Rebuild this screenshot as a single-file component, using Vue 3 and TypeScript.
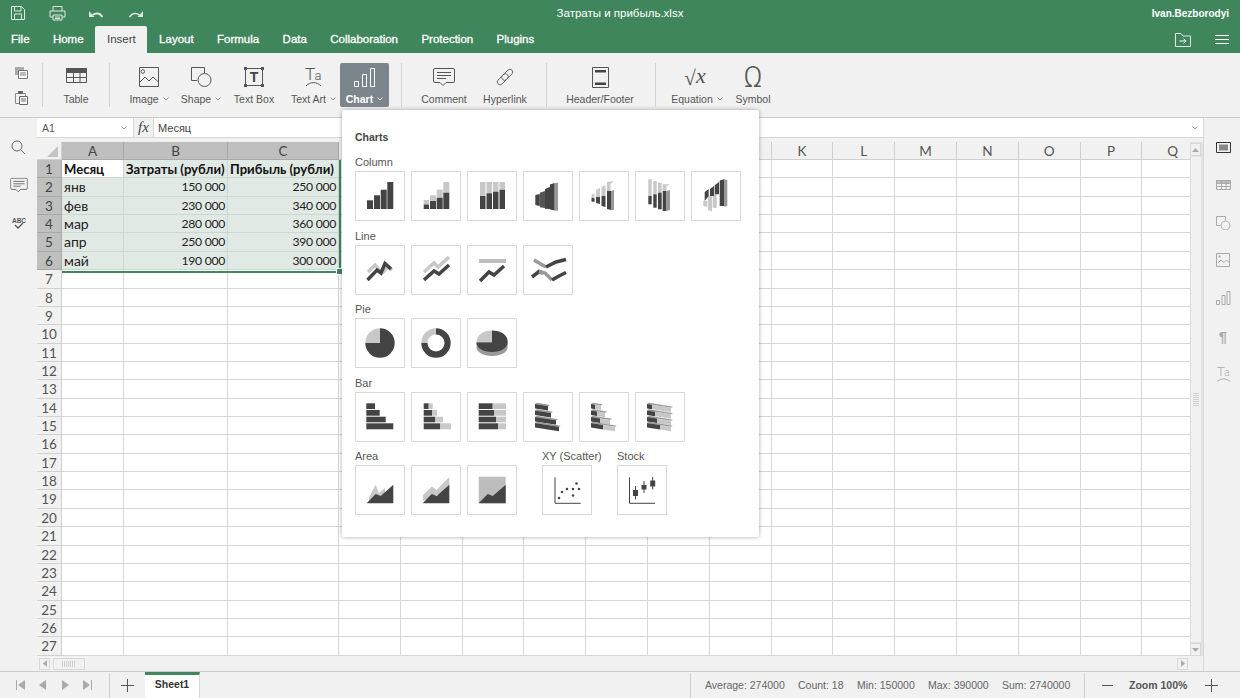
<script setup lang="ts">
import { h, type FunctionalComponent } from 'vue'

type Shape = { d?: string; f?: string; s?: string; w?: number; t?: string; x?: number; y?: number; size?: number; font?: string; weight?: number; italic?: boolean }

// all the small pictures are lists of shapes, drawn by this one component
const Ico: FunctionalComponent<{ shapes: Shape[]; w?: number; h?: number }> = (props) =>
  h(
    'svg',
    { width: props.w ?? 50, height: props.h ?? 50, viewBox: `0 0 ${props.w ?? 50} ${props.h ?? 50}`, style: 'display:block' },
    props.shapes.map((p) =>
      p.t
        ? h('text', { x: p.x, y: p.y, fill: p.f ?? '#444', 'font-size': p.size, 'font-family': p.font ?? 'Liberation Sans, sans-serif', 'font-weight': p.weight ?? 400, 'font-style': p.italic ? 'italic' : 'normal', 'text-anchor': 'middle' }, p.t)
        : h('path', { d: p.d, fill: p.f ?? 'none', stroke: p.s ?? 'none', 'stroke-width': p.w ?? 1 })
    )
  )

const D = '#444'
const L = '#c8c8c8'
const M = '#999'
const r = (x0: number, y0: number, x1: number, y1: number, f = D): Shape => ({ d: `M${x0} ${y0}H${x1}V${y1}H${x0}Z`, f })
const pg = (f: string, ...pts: number[]): Shape => {
  let d = ''
  for (let i = 0; i < pts.length; i += 2) d += `${i ? 'L' : 'M'}${pts[i]} ${pts[i + 1]}`
  return { d: d + 'Z', f }
}
const ln = (s: string, w: number, ...pts: number[]): Shape => {
  let d = ''
  for (let i = 0; i < pts.length; i += 2) d += `${i ? 'L' : 'M'}${pts[i]} ${pts[i + 1]}`
  return { d, s, w }
}

// one sloped bar of the 3d bar charts
const bar3d = (y: number, x1: number, split?: number): Shape[] => {
  const sl = (x1 - 12) * 0.16
  const out: Shape[] = [pg(M, 12, y, x1, y + sl, x1 + 2, y + sl - 1.2, 14, y - 1.2)]
  if (split === undefined) {
    out.push(pg(D, 12, y, x1, y + sl, x1, y + sl + 4.5, 12, y + 4.5))
  } else {
    const s2 = (split - 12) * 0.16
    out.push(pg(D, 12, y, split, y + s2, split, y + s2 + 4.5, 12, y + 4.5))
    out.push(pg(L, split, y + s2, x1, y + sl, x1, y + sl + 4.5, split, y + s2 + 4.5))
  }
  return out
}

const sections: { label: string; icons: Shape[][] }[] = [
  {
    label: 'Column',
    icons: [
      [r(12, 29.3, 18, 38), r(19, 24.3, 25, 38), r(25.7, 18.7, 31.7, 38), r(32.3, 11, 38.3, 38)],
      [r(12.7, 29, 18, 33.5, L), r(12.7, 33.5, 18, 38), r(19, 24.3, 25, 30, L), r(19, 30, 25, 38), r(25.7, 18.7, 31.7, 26.7, L), r(25.7, 26.7, 31.7, 38), r(32.3, 11, 38.3, 21.7, L), r(32.3, 21.7, 38.3, 38)],
      [r(13, 11, 18.5, 25, L), r(13, 25, 18.5, 38), r(19.5, 11, 25, 22.3, L), r(19.5, 22.3, 25, 38), r(26, 11, 31.5, 20.7, L), r(26, 20.7, 31.5, 38), r(32.5, 11, 38, 18.7, L), r(32.5, 18.7, 38, 38)],
      [pg(D, 12.3, 24, 16.8, 23, 16.8, 35, 12.3, 34), pg('#555', 16.8, 21.7, 22, 20, 22, 37, 16.8, 36.3), pg(D, 22, 18, 27, 16, 27, 38, 22, 37.7), pg(D, 27, 13.5, 31.7, 12, 31.7, 39.5, 27, 38.5), pg(M, 31.7, 12, 35, 11.7, 35, 39.7, 31.7, 39.5)],
      [pg(L, 12.5, 24, 15.5, 22, 15.5, 27, 12.5, 27), pg(D, 12.5, 27, 15.5, 27, 15.5, 31, 12.5, 30.5), pg(L, 17, 19, 21, 17, 21, 26, 17, 26), pg(D, 17, 26, 21, 26, 21, 33, 17, 32), pg(L, 22.5, 16, 26.5, 14, 26.5, 25, 22.5, 25), pg(D, 22.5, 25, 26.5, 25, 26.5, 36, 22.5, 35), pg(L, 28, 11, 35, 10, 31.5, 13, 31.5, 20, 28, 20), pg(D, 28, 20, 32, 20, 32, 39, 28, 38), pg(M, 32, 20, 35, 19, 35, 39, 32, 39)],
      [pg(L, 13.3, 8.3, 16.7, 8.3, 16.7, 25, 13.3, 25), r(13.3, 25, 16.7, 33.3), pg(L, 18.3, 10, 21.7, 10, 21.7, 23.3, 18.3, 23.3), r(18.3, 23.3, 21.7, 36.7), pg(L, 23, 11.7, 26.7, 11.7, 26.7, 21.7, 23, 21.7), r(23, 21.7, 26.7, 38.3), pg(L, 27.7, 13.3, 35, 13.3, 31.5, 15, 31.5, 20, 27.7, 20), r(27.7, 20, 31.5, 40), pg(M, 31.5, 20, 35, 19, 35, 39, 31.5, 40)],
      [pg(L, 12.3, 30, 16.3, 30, 16.3, 36, 12.3, 35), pg(L, 17, 25, 21, 25, 21, 40.5, 17, 39), pg(L, 21.7, 23.3, 25.7, 23.3, 25.7, 37, 21.7, 36.7), pg(D, 13.7, 21, 17.7, 18, 17.7, 25, 13.7, 30), pg(D, 19, 18, 23, 15, 23, 25, 19, 25), pg(D, 23.7, 14.3, 28, 11, 28, 23.3, 23.7, 23.3), pg(D, 28.7, 9.5, 33, 8.3, 33, 35, 28.7, 35), pg(M, 33, 8.3, 36.3, 9, 36.3, 35, 33, 35.7)]
    ]
  },
  {
    label: 'Line',
    icons: [
      [ln(L, 3.5, 13, 27, 20, 20, 27, 28, 33, 22, 37, 25), ln(D, 3.5, 12.5, 35, 22, 25, 26, 28, 30, 18.5, 36, 24)],
      [ln(L, 3.5, 13, 27, 23, 18, 27, 22, 38, 12), ln(D, 3.5, 13, 35, 23, 26, 28, 29, 38, 20)],
      [r(12, 14, 39, 18, '#bdbdbd'), ln(D, 3.5, 13, 36, 22, 27, 27, 30, 37, 21)],
      [ln(M, 3.5, 11, 15, 23, 22), ln(D, 3.5, 23, 22, 33, 17, 43, 14.5), ln(D, 3.5, 9, 32, 16, 26.5, 20, 28), ln(M, 3.5, 16, 26.5, 22, 28, 29, 35), ln(D, 3.5, 29, 35, 36, 31, 43, 27.5)]
    ]
  },
  {
    label: 'Pie',
    icons: [
      [{ d: 'M25 10.3A14.7 14.7 0 0 0 10.3 25H25Z', f: L }, { d: 'M25 10.3A14.7 14.7 0 1 1 10.3 25H25Z', f: D }],
      [{ d: 'M25 10.3A14.7 14.7 0 0 0 10.3 25H16.5A8.5 8.5 0 0 1 25 16.5Z', f: L }, { d: 'M25 10.3A14.7 14.7 0 1 1 10.3 25H16.5A8.5 8.5 0 1 0 25 16.5Z', f: D }],
      [{ d: 'M9.5 24V29C9.5 34 16 38 25 38S40.7 34 40.7 29V24Z', f: M }, { d: 'M25 12.5C16 12.5 9.5 17 9.5 24.5H25Z', f: L }, { d: 'M25 12.5C34 12.5 40.7 17 40.7 23.5S34 34 25 34S9.5 30 9.5 24.5H25Z', f: D }]
    ]
  },
  {
    label: 'Bar',
    icons: [
      [r(11.3, 11.3, 20, 17), r(11.3, 18, 24.7, 23.7), r(11.3, 24.7, 30.7, 30.3), r(11.3, 31.3, 38.3, 37.3)],
      [r(12.7, 11.3, 17.7, 17), r(17.7, 11.3, 21.7, 17, L), r(12.7, 18, 21, 23.7), r(21, 18, 26, 23.7, L), r(12.7, 24.7, 24.3, 30.3), r(24.3, 24.7, 32, 30.3, L), r(12.7, 31.3, 29.3, 37.3), r(29.3, 31.3, 40, 37.3, L)],
      [r(11.7, 11.3, 25.7, 17), r(25.7, 11.3, 39, 17, L), r(11.7, 18, 27.3, 23.7), r(27.3, 18, 39, 23.7, L), r(11.7, 24.7, 29.3, 30.3), r(29.3, 24.7, 39, 30.3, L), r(11.7, 31.3, 31, 37.3), r(31, 31.3, 39, 37.3, L)],
      [...bar3d(12, 25), ...bar3d(18.5, 28), ...bar3d(25, 33), ...bar3d(31, 36)],
      [...bar3d(12, 22, 16), ...bar3d(18.5, 26, 18), ...bar3d(25, 31, 21), ...bar3d(31, 36, 24)],
      [...bar3d(12, 36, 17), ...bar3d(18.5, 36, 20), ...bar3d(25, 36, 22), ...bar3d(31, 36, 25)]
    ]
  }
]

const areaIcons: Shape[][] = [
  [pg(L, 14, 32, 20.7, 19.7, 24, 28, 30, 23, 30, 33, 14, 36), pg(D, 11.7, 38.3, 20.7, 29, 25.7, 31, 38.3, 19.7, 38.3, 38.3)],
  [pg(L, 12, 30, 21, 21.5, 25.5, 25, 38.3, 12, 38.3, 25, 12, 36), pg(D, 11.7, 38.3, 20.7, 29, 25.7, 31, 38.3, 19.7, 38.3, 38.3)],
  [r(11.7, 11.7, 38.7, 38.3, '#bdbdbd'), pg(D, 11.7, 38.3, 20.7, 29, 25.7, 31, 38.7, 19.7, 38.7, 38.3)]
]
const dot = (x: number, y: number): Shape => ({ d: `M${x - 1.3} ${y}a1.3 1.3 0 1 0 2.6 0a1.3 1.3 0 1 0 -2.6 0`, f: D })
const scatterIcon: Shape[] = [ln(D, 1, 13, 12.3, 13, 38.3, 38.7, 38.3), dot(17, 33), dot(20, 27), dot(25, 24), dot(31, 24), dot(37, 24), dot(31, 30.5), dot(34.5, 18.5)]
const stockIcon: Shape[] = [ln(D, 1, 12.5, 12.3, 12.5, 38.3, 38, 38.3), ln(D, 1, 18.5, 21, 18.5, 34.5), r(16, 25, 21, 31), ln(D, 1, 27, 16, 27, 28), r(24.5, 20, 29.5, 24.5), ln(D, 1, 35.7, 12, 35.7, 24.5), r(33.2, 15.5, 38.2, 21.5)]

// outline of one chain link, going along the up-right diagonal
const link = (x0: number, y0: number, x1: number, y1: number, rad = 2.8): Shape => {
  const n = rad * 0.707
  return {
    d: `M${x0 + n} ${y0 + n}L${x1 + n} ${y1 + n}A${rad} ${rad} 0 0 0 ${x1 - n} ${y1 - n}L${x0 - n} ${y0 - n}A${rad} ${rad} 0 0 0 ${x0 + n} ${y0 + n}Z`,
    s: '#666'
  }
}

// toolbar pictures
const G = '#555'
const icTable: Shape[] = [r(0, 0, 21, 5, G), { d: 'M.5 5V14.5H20.5V5M.5 9.5H20.5M7.5 5V14.5M14 5V14.5', s: G }]
const icImage: Shape[] = [{ d: 'M.5 .5H19.5V19.5H.5Z', s: G }, { d: 'M2 4.5a1.8 1.8 0 1 0 3.6 0a1.8 1.8 0 1 0 -3.6 0', s: G }, { d: 'M1 15L6 10L10 14L14 10L19 14.5', s: G }]
const icShape: Shape[] = [{ d: 'M6 13.5H.5V.5H13.5V6', s: G }, { d: 'M7 13a6.5 6.5 0 1 0 13 0a6.5 6.5 0 1 0 -13 0', s: G }]
const icTextBox: Shape[] = [{ d: 'M2.5 2.5H19.5V19.5H2.5Z', s: G }, r(1, 1, 4, 4, G), r(18, 1, 21, 4, G), r(1, 18, 4, 21, G), r(18, 18, 21, 21, G), { t: 'T', x: 11, y: 16, size: 14, weight: 700, f: D }]
const icTextArt: Shape[] = [{ t: 'T', x: 7, y: 17, size: 17, f: G, font: 'Roboto, sans-serif', weight: 300 }, { t: 'a', x: 15, y: 17, size: 13, f: G, font: 'Roboto, sans-serif', weight: 300 }, { d: 'M3 23C7 18.5 14 18.5 18 23', s: G }]
const barsIcon = (c: string): Shape[] => [{ d: 'M1.5 13.5H5.5V18.5H1.5ZM9.5 6.5H13.5V18.5H9.5ZM17.5 .5H21.5V18.5H17.5Z', s: c }]
const icComment: Shape[] = [{ d: 'M2 .5H20A1.5 1.5 0 0 1 21.5 2V13A1.5 1.5 0 0 1 20 14.5H13L10 17.5L7 14.5H2A1.5 1.5 0 0 1 .5 13V2A1.5 1.5 0 0 1 2 .5Z', s: G }, { d: 'M4 4.5H18M4 7.5H18M4 10.5H13', s: G }]
const icLink: Shape[] = [link(4, 14, 9.5, 8.5), link(8.5, 9.5, 14, 4)]
const icHeadFoot: Shape[] = [{ d: 'M.5 .5H16.5V20.5H.5Z', s: G }, r(3, 3, 14, 5.5, D), r(3, 15.5, 14, 18, D)]
const icEq: Shape[] = [{ t: '√', x: 8, y: 22, size: 21, f: G, font: 'Liberation Serif, serif' }, { t: 'x', x: 19, y: 20, size: 22, f: G, italic: true, font: 'Liberation Serif, serif' }]
const icOmega: Shape[] = [{ t: 'Ω', x: 15, y: 27, size: 29, f: G, font: 'Roboto, sans-serif', weight: 300 }]
const chevron = (c: string): Shape[] => [{ d: 'M.5 .5L3 3L5.5 .5', s: c, w: 0.8 }]

type Item = { label: string; w: number; ml?: number; icon: Shape[]; iw: number; ih: number; caret?: boolean; active?: boolean }
const groups: { w: number; pl: number; items: Item[] }[] = [
  { w: 66, pl: 15, items: [{ label: 'Table', w: 36, icon: icTable, iw: 21, ih: 18 }] },
  {
    w: 291,
    pl: 13,
    items: [
      { label: 'Image', w: 52, icon: icImage, iw: 20, ih: 20, caret: true },
      { label: 'Shape', w: 52, icon: icShape, iw: 21, ih: 20, caret: true },
      { label: 'Text Box', w: 54, icon: icTextBox, iw: 22, ih: 22 },
      { label: 'Text Art', w: 53, ml: 6, icon: icTextArt, iw: 22, ih: 28, caret: true },
      { label: 'Chart', w: 49, icon: barsIcon('#fff'), iw: 23, ih: 19, caret: true, active: true }
    ]
  },
  {
    w: 144,
    pl: 16,
    items: [
      { label: 'Comment', w: 52, icon: icComment, iw: 22, ih: 18 },
      { label: 'Hyperlink', w: 70, icon: icLink, iw: 18, ih: 18 }
    ]
  },
  { w: 108, pl: 13, items: [{ label: 'Header/Footer', w: 80, icon: icHeadFoot, iw: 17, ih: 21 }] },
  {
    w: 130,
    pl: 13,
    items: [
      { label: 'Equation', w: 56, icon: icEq, iw: 30, ih: 28, caret: true },
      { label: 'Symbol', w: 56, icon: icOmega, iw: 30, ih: 34 }
    ]
  }
]

const tabs = ['File', 'Home', 'Insert', 'Layout', 'Formula', 'Data', 'Collaboration', 'Protection', 'Plugins']

// header quick icons
const W = '#dbe8e0'
const icSave: Shape[] = [{ d: 'M.5 .5H10.5L13.5 3.5V13.5H.5Z', s: W }, { d: 'M3.5 .5V5H10V.5M3.5 13.5V8H10.5V13.5', s: W }]
const icPrint: Shape[] = [{ d: 'M4 5V.5H13V5M4 11H1V5H16V11H13M4 9H13V14H4Z', s: W }, { d: 'M6 11H11M6 12.5H11', s: W }]
const icUndo: Shape[] = [pg(W, 0, 2, 0, 8, 5.5, 8, 3.5, 6), { d: 'M3.5 6C7 3.5 11 4 13.5 8', s: W, w: 2 }]
const icRedo: Shape[] = [pg(W, 14, 2, 14, 8, 8.5, 8, 10.5, 6), { d: 'M10.5 6C7 3.5 3 4 .5 8', s: W, w: 1.6 }]
const icFolder: Shape[] = [{ d: 'M.5 13.5V.5H6L8 3H15.5V13.5Z', s: W }, { d: 'M4.5 8H11M8.5 5.5L11 8L8.5 10.5', s: '#fff' }]
const icMenu: Shape[] = [{ d: 'M0 .5H14M0 4.5H14M0 8.5H14', s: '#fff' }]
const icCopy: Shape[] = [r(0, 0, 9, 8, '#aaa'), r(3, 3, 13, 12, '#fff'), { d: 'M3.5 3.5H12.5V11.5H3.5ZM5 6H11M5 8H11', s: '#777' }]
const icPaste: Shape[] = [{ d: 'M.5 2.5H10.5V12.5H.5Z', s: '#888' }, r(3, 0, 8, 3, '#666'), r(4, 5, 13, 14, '#fff'), { d: 'M4.5 5.5H12.5V13.5H4.5ZM6 8H11M6 10H11', s: '#666' }]
const icSearch: Shape[] = [{ d: 'M1 6a5 5 0 1 0 10 0a5 5 0 1 0 -10 0M9.7 9.7L14 14', s: '#666' }]
const icSpell: Shape[] = [{ t: 'ABC', x: 8, y: 6.5, size: 6.5, f: '#555', weight: 700 }, { d: 'M4 9L7 12L12 7', s: '#555', w: 1.3 }]
const icFit: Shape[] = [{ d: 'M.5 .5H14.5V10.5H.5Z', s: '#333' }, r(3, 2.5, 12, 8.5, '#888')]
const icTableS: Shape[] = [r(0, 0, 15, 3, '#bbb'), { d: 'M.5 .5H14.5V9.5H.5ZM.5 3.5H14.5M.5 6.5H14.5M5.5 .5V9.5M10 .5V9.5', s: '#aaa' }]
const icShapeS: Shape[] = [{ d: 'M4.5 9.5H.5V.5H9.5V4', s: '#aaa' }, { d: 'M5 9.5a4.5 4.5 0 1 0 9 0a4.5 4.5 0 1 0 -9 0', s: '#aaa' }]
const icImageS: Shape[] = [{ d: 'M.5 .5H13.5V13.5H.5Z', s: '#aaa' }, { d: 'M2 10L5 7L8 9.5L10.5 7L13 9.5', s: '#aaa' }, r(2.5, 2.5, 4.5, 4.5, '#aaa')]
const icBarsS: Shape[] = [{ d: 'M.5 9.5H3.5V13.5H.5ZM6 4.5H9V13.5H6ZM11 .5H14V13.5H11Z', s: '#aaa' }]
const icParaS: Shape[] = [{ t: '¶', x: 7, y: 14, size: 15, f: '#aaa', weight: 700 }]
const icTaS: Shape[] = [{ t: 'T', x: 5, y: 12.5, size: 13, f: '#aaa', font: 'Roboto, sans-serif', weight: 300 }, { t: 'a', x: 11, y: 12.5, size: 10, f: '#aaa', font: 'Roboto, sans-serif', weight: 300 }, { d: 'M1 18.5C5 15 10 15 14 18.5', s: '#aaa' }]
const rightIcons: { shape: Shape[]; w: number; h: number }[] = [
  { shape: icFit, w: 15, h: 11 },
  { shape: icTableS, w: 15, h: 10 },
  { shape: icShapeS, w: 15, h: 14 },
  { shape: icImageS, w: 14, h: 14 },
  { shape: icBarsS, w: 15, h: 14 },
  { shape: icParaS, w: 14, h: 16 },
  { shape: icTaS, w: 15, h: 20 }
]

const navFirst: Shape[] = [r(0, 0, 1, 10, '#aaa'), pg('#aaa', 9, 0, 9, 10, 2, 5)]
const navPrev: Shape[] = [pg('#aaa', 8, 0, 8, 10, 1, 5)]
const navNext: Shape[] = [pg('#aaa', 1, 0, 1, 10, 8, 5)]
const navLast: Shape[] = [r(8, 0, 9, 10, '#aaa'), pg('#aaa', 0, 0, 0, 10, 7, 5)]
const plus: Shape[] = [{ d: 'M0 6.5H13M6.5 0V13', s: '#555' }]
const minus: Shape[] = [{ d: 'M0 .5H11', s: '#555' }]

const triUp: Shape[] = [pg('#aaa', 0, 4, 7, 4, 3.5, 0)]
const triDown: Shape[] = [pg('#aaa', 0, 0, 7, 0, 3.5, 4)]
const triLeft: Shape[] = [pg('#aaa', 4, 0, 4, 7, 0, 3.5)]
const triRight: Shape[] = [pg('#aaa', 0, 0, 0, 7, 4, 3.5)]

const columns = 'ABCDEFGHIJKLMNOPQ'.split('')
const rowsCount = 27
const data: Record<number, string[]> = {
  1: ['Месяц', 'Затраты (рубли)', 'Прибыль (рубли)'],
  2: ['янв', '150 000', '250 000'],
  3: ['фев', '230 000', '340 000'],
  4: ['мар', '280 000', '360 000'],
  5: ['апр', '250 000', '390 000'],
  6: ['май', '190 000', '300 000']
}
const cellText = (row: number, col: number) => data[row]?.[col] ?? ''
const isSelected = (row: number, col: number) => row <= 6 && col <= 2 && !(row === 1 && col === 0)

const stats = [
  { text: 'Average: 274000', w: 93 },
  { text: 'Count: 18', w: 59 },
  { text: 'Min: 150000', w: 71 },
  { text: 'Max: 390000', w: 74 },
  { text: 'Sum: 2740000', w: 70 }
]
</script>

<template>
  <div class="app">
    <!-- Шапка -->
    <header class="titlebar">
      <div class="quick">
        <Ico class="q1" :shapes="icSave" :w="14" :h="14" />
        <Ico class="q2" :shapes="icPrint" :w="17" :h="15" />
        <Ico class="q3" :shapes="icUndo" :w="14" :h="9" />
        <Ico class="q4" :shapes="icRedo" :w="14" :h="9" />
      </div>
      <div class="doc-title">Затраты и прибыль.xlsx</div>
      <div class="user">Ivan.Bezborodyi</div>
    </header>
    <nav class="tabs">
      <div v-for="t in tabs" :key="t" class="tab" :class="{ active: t === 'Insert' }">{{ t }}</div>
      <div class="tabs-right">
        <Ico :shapes="icFolder" :w="16" :h="14" />
        <Ico :shapes="icMenu" :w="14" :h="9" />
      </div>
    </nav>

    <!-- Панель инструментов -->
    <section class="toolbar">
      <div class="clip">
        <Ico :shapes="icCopy" :w="13" :h="12" />
        <Ico :shapes="icPaste" :w="13" :h="14" />
      </div>
      <template v-for="g in groups" :key="g.w">
        <div class="sep"></div>
        <div class="tb-group" :style="{ width: g.w + 'px', paddingLeft: g.pl + 'px' }">
          <div
            v-for="it in g.items"
            :key="it.label"
            class="tb-btn"
            :class="{ active: it.active }"
            :style="{ width: it.w + 'px', marginLeft: (it.ml ?? 0) + 'px' }"
          >
            <div class="tb-icon"><Ico :shapes="it.icon" :w="it.iw" :h="it.ih" /></div>
            <div class="tb-label">
              {{ it.label }}
              <Ico v-if="it.caret" class="caret" :shapes="chevron(it.active ? '#fff' : '#777')" :w="6" :h="4" />
            </div>
          </div>
        </div>
      </template>
    </section>

    <main class="body">
      <aside class="side left">
        <div class="side-slot"><Ico :shapes="icSearch" :w="15" :h="15" /></div>
        <div class="side-slot"><Ico :shapes="icComment" :w="22" :h="18" class="small-comment" /></div>
        <div class="side-slot"><Ico :shapes="icSpell" :w="16" :h="13" /></div>
      </aside>

      <div class="center">
        <div class="formula">
          <div class="namebox">
            A1
            <Ico :shapes="chevron('#888')" :w="6" :h="4" />
          </div>
          <div class="fx">fx</div>
          <div class="finput">
            Месяц
            <Ico :shapes="chevron('#888')" :w="6" :h="4" />
          </div>
        </div>

        <div class="sheet-wrap">
          <div class="sheet-view">
            <div class="sheet">
              <div class="corner"><span class="corner-tri"></span></div>
              <div v-for="(c, i) in columns" :key="c" class="col-head" :class="{ sel: i < 3 }">{{ c }}</div>
              <template v-for="row in rowsCount" :key="row">
                <div class="row-head" :class="{ sel: row <= 6 }">{{ row }}</div>
                <div
                  v-for="(c, i) in columns"
                  :key="c + row"
                  class="cell"
                  :class="{ sel: isSelected(row, i), num: i > 0 && row > 1, bold: row === 1 }"
                >{{ cellText(row, i) }}</div>
              </template>
            </div>
            <div class="selection"><span class="handle"></span></div>
          </div>
          <div class="vscroll">
            <div class="sb-btn"><Ico :shapes="triUp" :w="7" :h="4" /></div>
            <div class="vthumb"><span class="grip"></span></div>
            <div class="sb-btn"><Ico :shapes="triDown" :w="7" :h="4" /></div>
          </div>
        </div>

        <div class="hscroll">
          <div class="sb-btn"><Ico :shapes="triLeft" :w="4" :h="7" /></div>
          <div class="hthumb"><span class="hgrip"></span></div>
          <div class="sb-btn end"><Ico :shapes="triRight" :w="4" :h="7" /></div>
        </div>
      </div>

      <aside class="side right">
        <div v-for="(ic, i) in rightIcons" :key="i" class="side-slot">
          <Ico :shapes="ic.shape" :w="ic.w" :h="ic.h" />
        </div>
      </aside>
    </main>

    <footer class="status">
      <div class="nav">
        <Ico :shapes="navFirst" :w="9" :h="10" />
        <Ico :shapes="navPrev" :w="9" :h="10" />
        <Ico :shapes="navNext" :w="9" :h="10" />
        <Ico :shapes="navLast" :w="9" :h="10" />
      </div>
      <div class="add-sheet"><Ico :shapes="plus" :w="13" :h="13" /></div>
      <div class="sheet-tab">Sheet1</div>
      <div class="stats">
        <span v-for="s in stats" :key="s.text" class="stat" :style="{ width: s.w + 'px' }">{{ s.text }}</span>
      </div>
      <div class="zoom">
        <Ico :shapes="minus" :w="11" :h="1" />
        <span class="zoom-text">Zoom 100%</span>
        <Ico :shapes="plus" :w="13" :h="13" />
      </div>
    </footer>

    <!-- Меню диаграмм -->
    <div class="chart-menu">
      <div class="menu-title">Charts</div>
      <div v-for="s in sections" :key="s.label" class="menu-section">
        <div class="menu-label">{{ s.label }}</div>
        <div class="menu-row">
          <div v-for="(ic, i) in s.icons" :key="i" class="chart-btn"><Ico :shapes="ic" /></div>
        </div>
      </div>
      <div class="menu-bottom">
        <div class="menu-section area">
          <div class="menu-label">Area</div>
          <div class="menu-row">
            <div v-for="(ic, i) in areaIcons" :key="i" class="chart-btn"><Ico :shapes="ic" /></div>
          </div>
        </div>
        <div class="menu-section scatter">
          <div class="menu-label">XY (Scatter)</div>
          <div class="chart-btn"><Ico :shapes="scatterIcon" /></div>
        </div>
        <div class="menu-section">
          <div class="menu-label">Stock</div>
          <div class="chart-btn"><Ico :shapes="stockIcon" /></div>
        </div>
      </div>
    </div>
  </div>
</template>

<style scoped>
.app {
  position: relative;
  width: 1240px;
  height: 698px;
  overflow: hidden;
  display: flex;
  flex-direction: column;
  background: #f1f1f1;
  font-family: "Liberation Sans", Arial, sans-serif;
  font-size: 11px;
  color: #444;
}

/* Шапка */
.titlebar {
  height: 26px;
  flex: none;
  background: #40865c;
  color: #fff;
  display: flex;
  align-items: center;
  position: relative;
}

.quick {
  display: flex;
  align-items: center;
  width: 400px;
}

.q1 { margin-left: 11px; }
.q2 { margin-left: 24px; }
.q3 { margin-left: 23px; }
.q4 { margin-left: 26px; }

.doc-title {
  width: 440px;
  text-align: center;
  font-size: 11.5px;
}

.user {
  margin-left: auto;
  margin-right: 11px;
  font-size: 10px;
  font-weight: 700;
}

.tabs {
  height: 27px;
  flex: none;
  background: #40865c;
  display: flex;
}

.tab {
  padding: 0 11.7px;
  line-height: 27px;
  color: #fff;
  font-size: 11.5px;
  -webkit-text-stroke: 0.3px #fff;
}

.tab:first-child {
  padding-left: 11px;
}

.tab.active {
  background: #f1f1f1;
  color: #444;
  -webkit-text-stroke: 0;
  border-radius: 2px 2px 0 0;
}

.tabs-right {
  margin-left: auto;
  display: flex;
  align-items: center;
  gap: 24px;
  padding-right: 11px;
}

/* Панель инструментов */
.toolbar {
  height: 65px;
  flex: none;
  box-sizing: border-box;
  padding-top: 10px;
  background: #f1f1f1;
  border-bottom: 1px solid #cbcbcb;
  display: flex;
  align-items: flex-start;
}

.clip {
  width: 42px;
  height: 44px;
  display: flex;
  flex-direction: column;
  align-items: center;
  gap: 12px;
  padding-top: 4px;
  box-sizing: border-box;
}

.sep {
  width: 1px;
  height: 44px;
  background: #d4d4d4;
  flex: none;
}

.tb-group {
  display: flex;
  box-sizing: border-box;
  flex: none;
}

.tb-btn {
  height: 44px;
  display: flex;
  flex-direction: column;
  align-items: center;
  flex: none;
  border-radius: 2px;
}

.tb-btn.active {
  background: #7d858c;
  color: #fff;
  font-weight: 700;
}

.tb-icon {
  height: 28px;
  display: flex;
  align-items: center;
  justify-content: center;
  margin-bottom: 1px;
}

.tb-label {
  display: flex;
  align-items: center;
  gap: 4px;
  white-space: nowrap;
  font-size: 10.5px;
  line-height: 14px;
  color: #555;
}

.tb-btn.active .tb-label {
  color: #fff;
}

/* Основная часть */
.body {
  flex: 1;
  display: flex;
  min-height: 0;
}

.side {
  width: 37px;
  flex: none;
  display: flex;
  flex-direction: column;
  padding-top: 10.7px;
  box-sizing: border-box;
}

.side-slot {
  height: 37.67px;
  display: flex;
  align-items: center;
  justify-content: center;
  flex: none;
}

.side.right {
  border-left: 1px solid #d8d8d8;
  padding-left: 2px;
}

.small-comment {
  transform: scale(0.8);
}

.center {
  flex: 1;
  min-width: 0;
  display: flex;
  flex-direction: column;
}

.formula {
  height: 20px;
  flex: none;
  display: flex;
  background: #fff;
  border-bottom: 1px solid #d8d8d8;
  box-sizing: border-box;
  margin-bottom: 4px;
}

.namebox {
  width: 96px;
  display: flex;
  align-items: center;
  justify-content: space-between;
  padding: 0 6px 0 5px;
  box-sizing: border-box;
  font-size: 10.5px;
  color: #555;
}

.fx {
  width: 21px;
  background: #f1f1f1;
  border-left: 1px solid #d8d8d8;
  border-right: 1px solid #d8d8d8;
  box-sizing: border-box;
  text-align: center;
  font-family: "Liberation Serif", serif;
  font-style: italic;
  font-size: 15px;
  line-height: 18px;
  color: #444;
}

.finput {
  flex: 1;
  display: flex;
  align-items: center;
  justify-content: space-between;
  padding: 0 5px 0 4px;
  font-size: 11px;
  color: #444;
}

.sheet-wrap {
  flex: 1;
  min-height: 0;
  display: flex;
}

.sheet-view {
  position: relative;
  flex: 1;
  min-width: 0;
  overflow: hidden;
  background: #fff;
}

.sheet {
  display: grid;
  grid-template-columns: 25px 62px 104px 111px repeat(14, 61.8px);
  grid-template-rows: 18px repeat(27, 18.37px);
  width: max-content;
  font-family: Lato, "Open Sans", sans-serif;
  color: #111;
}

.corner {
  background: #f1f1f1;
  border-right: 1px solid #d0d0d0;
  border-bottom: 1px solid #d0d0d0;
  position: relative;
}

.corner-tri {
  position: absolute;
  right: 3px;
  bottom: 2px;
  border-left: 11px solid transparent;
  border-bottom: 11px solid #c4c4c4;
}

.col-head,
.row-head {
  background: #f1f1f1;
  border-right: 1px solid #d0d0d0;
  border-bottom: 1px solid #d0d0d0;
  text-align: center;
  font-size: 13.5px;
  line-height: 18.5px;
  color: #555;
  box-sizing: border-box;
}

.col-head.sel,
.row-head.sel {
  background: #bfbfbf;
  color: #444;
  border-color: #a9a9a9;
}

.cell {
  border-right: 1px solid #d6d6d6;
  border-bottom: 1px solid #d6d6d6;
  box-sizing: border-box;
  padding: 0 2px;
  font-size: 14px;
  line-height: 18.5px;
  white-space: nowrap;
  overflow: hidden;
  color: #222;
}

.cell.sel {
  background: #e1e9e4;
  border-color: #cdd7d1;
}

.cell.num {
  text-align: right;
  font-size: 12.2px;
  letter-spacing: -0.3px;
}

.cell.bold {
  font-weight: 700;
  font-size: 13.1px;
  color: #111;
}

.selection {
  position: absolute;
  left: 25px;
  top: 18px;
  width: 277px;
  height: 111px;
  border-right: 2px solid #40865c;
  border-bottom: 2px solid #40865c;
  pointer-events: none;
}

.handle {
  position: absolute;
  right: -4px;
  bottom: -4px;
  width: 5px;
  height: 5px;
  background: #40865c;
  border: 1px solid #fff;
}

.vscroll {
  width: 13px;
  flex: none;
  display: flex;
  flex-direction: column;
  background: #e2e2e2;
  padding-top: 1px;
}

.sb-btn {
  width: 11px;
  height: 13px;
  flex: none;
  box-sizing: border-box;
  background: #f1f1f1;
  border: 1px solid #d8d8d8;
  display: flex;
  align-items: center;
  justify-content: center;
}

.vthumb {
  flex: 1;
  width: 11px;
  margin: 1px 0;
  background: #f1f1f1;
  border-left: 1px solid #dcdcdc;
  box-sizing: border-box;
  display: flex;
  align-items: center;
  justify-content: center;
}

.grip {
  display: block;
  width: 6px;
  height: 14px;
  background: repeating-linear-gradient(#d0d0d0 0 1px, #f1f1f1 1px 2px);
}

.hscroll {
  height: 15px;
  flex: none;
  display: flex;
  align-items: center;
  padding: 0 15px 0 2px;
  background: #f1f1f1;
}

.hscroll .sb-btn {
  width: 11px;
  height: 12px;
}

.hthumb {
  width: 32px;
  height: 12px;
  margin-left: 3px;
  box-sizing: border-box;
  border: 1px solid #d8d8d8;
  display: flex;
  align-items: center;
  justify-content: center;
}

.hgrip {
  display: block;
  width: 14px;
  height: 6px;
  background: repeating-linear-gradient(90deg, #d0d0d0 0 1px, #f1f1f1 1px 2px);
}

.sb-btn.end {
  margin-left: auto;
}

/* Нижняя панель */
.status {
  height: 27px;
  flex: none;
  display: flex;
  align-items: center;
  background: #f1f1f1;
  border-top: 1px solid #cbcbcb;
  box-sizing: border-box;
}

.nav {
  width: 109px;
  height: 100%;
  box-sizing: border-box;
  display: flex;
  align-items: center;
  gap: 13.3px;
  padding-left: 16px;
}

.add-sheet {
  width: 36px;
  height: 25px;
  flex: none;
  border-left: 1px solid #d0d0d0;
  box-sizing: border-box;
  display: flex;
  align-items: center;
  justify-content: center;
}

.sheet-tab {
  width: 55px;
  height: 26px;
  box-sizing: border-box;
  background: #fff;
  border-top: 3px solid #40865c;
  border-right: 1px solid #d8d8d8;
  text-align: center;
  font-weight: 700;
  font-size: 10.5px;
  line-height: 19px;
  color: #333;
  align-self: flex-start;
}

.stats {
  margin-left: 490px;
  width: 395px;
  height: 25px;
  box-sizing: border-box;
  border-left: 1px solid #d0d0d0;
  border-right: 1px solid #d0d0d0;
  display: flex;
  align-items: center;
  padding-left: 14px;
  font-size: 10.5px;
  color: #666;
}

.stat {
  flex: none;
  white-space: nowrap;
}

.zoom {
  display: flex;
  align-items: center;
  padding-left: 17px;
}

.zoom-text {
  font-weight: 700;
  font-size: 10.5px;
  color: #555;
  margin: 0 18px 0 16px;
}

/* Меню диаграмм */
.chart-menu {
  position: absolute;
  left: 342px;
  top: 110px;
  width: 417px;
  height: 427px;
  box-sizing: border-box;
  padding: 20px 13px 0;
  background: #fff;
  border-radius: 2px;
  box-shadow: 0 0 4px rgba(0, 0, 0, 0.35);
}

.menu-title {
  font-weight: 700;
  font-size: 10.5px;
  line-height: 14px;
  color: #444;
  margin-bottom: 11px;
}

.menu-section {
  margin-bottom: 7.5px;
}

.menu-label {
  height: 14px;
  line-height: 14px;
  font-size: 11px;
  color: #555;
  margin-bottom: 2px;
}

.menu-row {
  display: flex;
  gap: 6px;
}

.chart-btn {
  width: 50px;
  height: 50px;
  box-sizing: border-box;
  flex: none;
  outline: 1px solid #d8d8d8;
  outline-offset: -1px;
  background: #fff;
}

.menu-bottom {
  display: flex;
}

.menu-section.area {
  width: 187px;
}

.menu-section.scatter {
  width: 75px;
}
</style>

<style>
html, body {
  margin: 0;
  overflow: hidden;
}
</style>
